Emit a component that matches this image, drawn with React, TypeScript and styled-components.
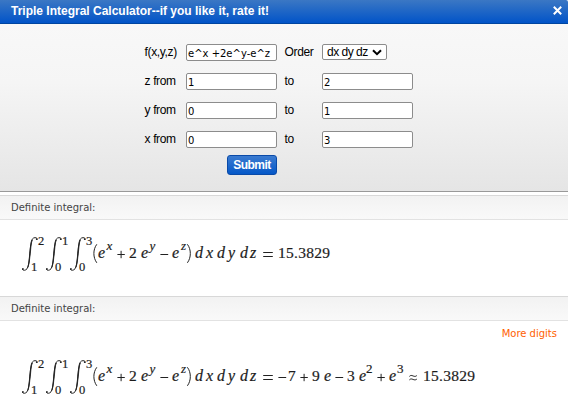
import React from "react";
import styled, { createGlobalStyle } from "styled-components";

const GlobalStyle = createGlobalStyle`
  * { box-sizing: border-box; }
  body { margin: 0; background: #fff; overflow: hidden; }
`;

const Page = styled.main`
  width: 568px;
  height: 420px;
  display: flex;
  flex-direction: column;
  background: #fff;
  font-family: "Liberation Sans", Arial, sans-serif;
  font-size: 12px;
  color: #000;
`;

const TitleBar = styled.header`
  display: flex;
  justify-content: space-between;
  align-items: center;
  height: 24px;
  padding: 0 6px 2px 11px;
  border-bottom: 1px solid #0045a0;
  border-top-right-radius: 2px;
  background: linear-gradient(#3b77c4, #0154c8);
  color: #fff;
  font-weight: bold;
  white-space: nowrap;
`;

const Title = styled.span`
  letter-spacing: 0;
`;

const CloseIcon = styled.svg`
  display: block;
  width: 9px;
  height: 9px;
  margin-top: -1px;
`;

const FormPanel = styled.form`
  height: 168px;
  padding: 20px 0 0 144px;
  border-bottom: 1px solid #999;
  background: linear-gradient(#f8f8f8, #f5f5f5 35%, #e5e5e5);
`;

const Fields = styled.div`
  display: grid;
  grid-template-columns: 42px 91px 45px 91px;
  grid-auto-rows: 17px;
  row-gap: 12px;
`;

const Label = styled.label<{ $inset?: boolean }>`
  padding-left: ${(p) => (p.$inset ? "7.5px" : "0.5px")};
  font-size: 12px;
  letter-spacing: -0.35px;
  line-height: 17px;
  white-space: nowrap;
`;

const Field = styled.input`
  display: block;
  width: 91px;
  height: 17px;
  margin: 0;
  padding: 1px 1px 0;
  border: 1px solid #8c8c8c;
  border-radius: 2px;
  background: #fff;
  color: #000;
  font: 10px "DejaVu Sans", Verdana, sans-serif;
  outline: none;
`;

const Order = styled.button`
  display: flex;
  align-items: center;
  justify-content: space-between;
  width: 65px;
  height: 16px;
  padding: 0 4px;
  border: 1px solid #8c8c8c;
  border-radius: 2px;
  background: #fff;
  color: #000;
  font: 12px "Liberation Sans", Arial, sans-serif;
  letter-spacing: -0.5px;
  white-space: nowrap;
`;

const Submit = styled.button`
  display: block;
  width: 50px;
  height: 20px;
  margin: 7px 0 0 83px;
  padding: 0;
  border: 1px solid #0a4aa8;
  border-radius: 3px;
  background: linear-gradient(#3b7bd0, #0558c8);
  color: #fff;
  font: bold 12px/18px "Liberation Sans", Arial, sans-serif;
  letter-spacing: -0.5px;
`;

const Results = styled.div`
  padding-top: 3px;
`;

const Pod = styled.section`
  height: 101px;
`;

const PodTitle = styled.h2`
  height: 25px;
  margin: 0;
  padding-left: 11px;
  border-top: 1px solid #d8d8d8;
  border-bottom: 1px solid #e2e2e2;
  background: linear-gradient(#f2f2f2, #f9f9f9);
  color: #444;
  font: normal 10px/24px "DejaVu Sans", Verdana, sans-serif;
`;

const More = styled.a`
  display: block;
  height: 22px;
  padding-right: 11px;
  color: #ff6000;
  font: 10px/26px "DejaVu Sans", Verdana, sans-serif;
  text-align: right;
`;

const Formula = styled.div`
  display: flex;
  height: 56px;
  padding: 15px 0 0 21px;
  color: #1c1c1c;
  font-family: "Liberation Serif", "Times New Roman", serif;
  -webkit-text-stroke: 0.2px #1c1c1c;
`;

const Integral = styled.div`
  display: flex;
  flex: none;
  width: 24px;
  height: 40px;
`;

const IntegralSign = styled.svg`
  flex: none;
  width: 18px;
  height: 40px;
`;

const Limits = styled.div`
  display: flex;
  flex-direction: column;
  justify-content: space-between;
  width: 6px;
  height: 38px;
  font-size: 12.5px;
  line-height: 12px;
`;

const Limit = styled.span<{ $lower?: boolean }>`
  margin-left: ${(p) => (p.$lower ? "-8px" : "-1px")};
`;

const Term = styled.span<{ $w: number; $kind: string }>`
  flex: none;
  width: ${(p) => p.$w}px;
  height: 40px;
  padding-top: ${(p) => (p.$kind === "sup" || p.$kind === "power" ? 1 : 8)}px;
  font-size: ${(p) => (p.$kind === "sup" || p.$kind === "power" ? 13 : p.$kind === "var" ? 16 : 15.5)}px;
  font-style: ${(p) => (p.$kind === "var" || p.$kind === "sup" ? "italic" : "normal")};
  letter-spacing: ${(p) => (p.$kind === "num" ? "0.25px" : "0")};
  line-height: 20px;
  white-space: nowrap;
`;

const Drawn = styled.svg<{ $w: number }>`
  flex: none;
  width: ${(p) => p.$w}px;
  height: 40px;
`;

type Part = [kind: string, text: string, width: number];

const SHAPES: Record<string, string> = {
  "(": "M3.8 9.3C-.1 14.5-.1 22.5 3.8 27.8",
  ")": "M.4 9.3C4.3 14.5 4.3 22.5.4 27.8",
  "+": "M.4 19.5h7.4M4.1 15.8v7.4",
  "-": "M.4 19.5h7.8",
  "=": "M.2 17.5h9.6M.2 21.5h9.6",
  "≈": "M.4 18.4c2.4-2.8 4.6 1.7 7.4-.8M.4 21.9c2.4-2.8 4.6 1.7 7.4-.8",
};

const integrand: Part[] = [
  ["op", "(", 5],
  ["var", "e", 8.5],
  ["sup", "x", 10.5],
  ["op", "+", 12],
  ["num", "2", 12],
  ["var", "e", 8.5],
  ["sup", "y", 10.5],
  ["op", "-", 12],
  ["var", "e", 9],
  ["sup", "z", 6],
  ["op", ")", 8],
  ["var", "d", 11],
  ["var", "x", 11],
  ["var", "d", 11],
  ["var", "y", 12],
  ["var", "d", 10],
  ["var", "z", 13],
  ["op", "=", 15],
];

const exact: Part[] = [
  ["op", "-", 10],
  ["num", "7", 12],
  ["op", "+", 12],
  ["num", "9", 12],
  ["var", "e", 11],
  ["op", "-", 12],
  ["num", "3", 12],
  ["var", "e", 7],
  ["power", "2", 11],
  ["op", "+", 12],
  ["var", "e", 8],
  ["power", "3", 12],
  ["op", "≈", 14],
];

const value: Part[] = [["num", "15.3829", 56]];

const limits = [
  ["2", "1"],
  ["1", "0"],
  ["3", "0"],
];

function Expression({ parts }: { parts: Part[] }) {
  return (
    <Formula>
      {limits.map(([upper, lower], i) => (
        <Integral key={i}>
          <IntegralSign viewBox="0 0 18 40">
            <path
              d="M16.2 4.3C16.3 2.5 13 1.8 11.3 4.1C8.5 8 9.3 29.5 6 33.8C4.4 36 1.2 35.5 1.5 33.9"
              fill="none"
              stroke="#222"
              strokeWidth="1"
            />
            <path d="M11.2 5C9.5 9 9.3 27 6.8 32.4C8.8 28 8.4 10 11.2 5Z" fill="#222" stroke="#222" strokeWidth=".7" />
            <circle cx="15.8" cy="4.2" r=".9" fill="#222" />
            <circle cx="1.9" cy="34" r=".9" fill="#222" />
          </IntegralSign>
          <Limits>
            <Limit>{upper}</Limit>
            <Limit $lower>{lower}</Limit>
          </Limits>
        </Integral>
      ))}
      {parts.map(([kind, text, width], i) =>
        kind === "op" ? (
          <Drawn key={i} $w={width} role="img" aria-label={text}>
            <path d={SHAPES[text]} fill="none" stroke="#222" strokeWidth="1" />
          </Drawn>
        ) : (
          <Term key={i} $w={width} $kind={kind}>
            {text}
          </Term>
        ),
      )}
    </Formula>
  );
}

const bounds = [
  ["z", "1", "2"],
  ["y", "0", "1"],
  ["x", "0", "3"],
];

export default function App() {
  return (
    <Page>
      <GlobalStyle />
      <TitleBar>
        <Title>Triple Integral Calculator--if you like it, rate it!</Title>
        <CloseIcon viewBox="0 0 9 9">
          <path d="M.8 .8l7.4 7.4M8.2 .8L.8 8.2" stroke="#fff" strokeWidth="2" />
        </CloseIcon>
      </TitleBar>
      <FormPanel>
        <Fields>
          <Label>f(x,y,z)</Label>
          <Field defaultValue="e^x +2e^y-e^z" />
          <Label $inset>Order</Label>
          <Order type="button">
            dx dy dz
            <svg width="10" height="7" viewBox="0 0 10 7">
              <path d="M1 1.2l4 4 4-4" fill="none" stroke="#000" strokeWidth="2" />
            </svg>
          </Order>
          {bounds.map(([name, from, to]) => (
            <React.Fragment key={name}>
              <Label>{name} from</Label>
              <Field defaultValue={from} />
              <Label $inset>to</Label>
              <Field defaultValue={to} />
            </React.Fragment>
          ))}
        </Fields>
        <Submit type="button">Submit</Submit>
      </FormPanel>
      <Results>
        <Pod>
          <PodTitle>Definite integral:</PodTitle>
          <Expression parts={[...integrand, ...value]} />
        </Pod>
        <Pod>
          <PodTitle>Definite integral:</PodTitle>
          <More>More digits</More>
          <Expression parts={[...integrand, ...exact, ...value]} />
        </Pod>
      </Results>
    </Page>
  );
}
